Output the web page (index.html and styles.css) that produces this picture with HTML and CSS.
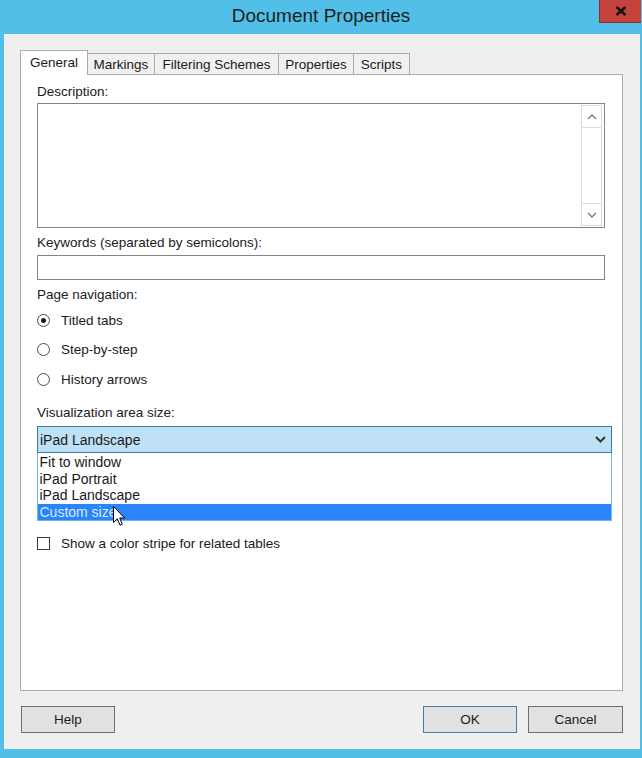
FILE: index.html
```html
<!DOCTYPE html>
<html>
<head>
<meta charset="utf-8">
<title>Document Properties</title>
<link rel="stylesheet" href="styles.css">
</head>
<body>
<div class="window">
  <div class="titlebar">
    <div class="tb-spacer"></div>
    <div class="title">Document Properties</div>
    <div class="close">
      <svg width="12" height="10" viewBox="0 0 12 10"><path d="M1.5 1 L10.5 9 M10.5 1 L1.5 9" stroke="#111" stroke-width="2.6" fill="none"/></svg>
    </div>
  </div>
  <div class="client">
    <div class="tabs">
      <div class="tab active t-general">General</div>
      <div class="tab t-markings">Markings</div>
      <div class="tab t-filter">Filtering Schemes</div>
      <div class="tab t-props">Properties</div>
      <div class="tab t-scripts">Scripts</div>
    </div>
    <div class="panel">
      <div class="label">Description:</div>
      <div class="textarea">
        <div class="vscroll">
          <div class="sbtn"><svg width="10" height="6" viewBox="0 0 10 6"><path d="M1 5 L5 1 L9 5" stroke="#7a7a7a" stroke-width="1.4" fill="none"/></svg></div>
          <div class="strack"></div>
          <div class="sbtn"><svg width="10" height="6" viewBox="0 0 10 6"><path d="M1 1 L5 5 L9 1" stroke="#7a7a7a" stroke-width="1.4" fill="none"/></svg></div>
        </div>
      </div>
      <div class="label l-keywords">Keywords (separated by semicolons):</div>
      <div class="input"></div>
      <div class="label l-nav">Page navigation:</div>
      <div class="radios">
        <div class="radio-row"><span class="radio checked"></span><span>Titled tabs</span></div>
        <div class="radio-row"><span class="radio"></span><span>Step-by-step</span></div>
        <div class="radio-row"><span class="radio"></span><span>History arrows</span></div>
      </div>
      <div class="label l-viz">Visualization area size:</div>
      <div class="combo">
        <span class="combo-text">iPad Landscape</span>
        <svg class="chev" width="11" height="7" viewBox="0 0 11 7"><path d="M1 1 L5.5 5.5 L10 1" stroke="#333" stroke-width="2" fill="none"/></svg>
      </div>
      <div class="list">
        <div class="item">Fit to window</div>
        <div class="item">iPad Portrait</div>
        <div class="item">iPad Landscape</div>
        <div class="item selected">Custom size</div>
        <svg class="cursor" width="13" height="21" viewBox="0 0 13 21"><path d="M0.5 0.5 L0.5 16.5 L4.3 12.8 L7 19.2 L9.3 18.2 L6.7 12 L11.7 12 Z" fill="#fff" stroke="#000" stroke-width="1" stroke-linejoin="round"/></svg>
      </div>
      <div class="check-row"><span class="checkbox"></span><span>Show a color stripe for related tables</span></div>
    </div>
    <div class="buttons">
      <div class="btn help">Help</div>
      <div class="btn-spacer"></div>
      <div class="btn ok">OK</div>
      <div class="btn cancel">Cancel</div>
    </div>
  </div>
</div>
</body>
</html>
```
FILE: styles.css
```css
html, body {
  margin: 0;
  padding: 0;
}
body {
  background: #51bfe7;
  font-family: "Liberation Sans", Arial, sans-serif;
  font-size: 13.5px;
  color: #1a1a1a;
  width: 642px;
  height: 758px;
  overflow: hidden;
}
.window {
  width: 642px;
  height: 758px;
  display: flex;
  flex-direction: column;
}
.titlebar {
  height: 34px;
  display: grid;
  grid-template-columns: 1fr auto 1fr;
  align-items: start;
}
.title {
  font-size: 19px;
  line-height: 32px;
  color: #1e1e1e;
  white-space: nowrap;
}
.close {
  justify-self: end;
  width: 42px;
  height: 23px;
  margin-right: 1px;
  box-sizing: border-box;
  background: #c5433d;
  border-left: 1px solid #8f2e29;
  border-bottom: 1px solid #8f2e29;
  display: flex;
  align-items: center;
  justify-content: center;
}
.client {
  margin: 0 2px 9px 4px;
  height: 715px;
  box-sizing: border-box;
  background: #efefef;
  padding: 16px 17px 0 16px;
  display: flex;
  flex-direction: column;
}
.tabs {
  display: flex;
  align-items: flex-end;
  height: 25px;
  margin-bottom: -1px;
  position: relative;
  z-index: 1;
}
.tab {
  box-sizing: border-box;
  height: 22px;
  border: 1px solid #acacac;
  background: #f0f0f0;
  margin-left: -1px;
  padding-top: 1px;
  display: flex;
  align-items: center;
  justify-content: center;
  white-space: nowrap;
  font-size: 13.5px;
}
.tab.active {
  height: 25px;
  background: #fff;
  border-bottom: none;
  margin-left: 0;
  padding-top: 0;
  padding-bottom: 1px;
  position: relative;
  z-index: 2;
}
.t-general { width: 68px; }
.t-markings { width: 68px; }
.t-filter { width: 125px; }
.t-props { width: 76px; }
.t-scripts { width: 57px; }
.panel {
  background: #fff;
  border: 1px solid #acacac;
  height: 617px;
  box-sizing: border-box;
  padding: 9px 0 0 16px;
  display: flex;
  flex-direction: column;
  align-items: flex-start;
}
.label {
  line-height: 16px;
  height: 16px;
  white-space: nowrap;
}
.textarea {
  margin-top: 3px;
  width: 568px;
  height: 125px;
  box-sizing: border-box;
  border: 1px solid #848484;
  padding: 1px 2px 0 0;
  display: flex;
  justify-content: flex-end;
}
.vscroll {
  width: 21px;
  height: 121px;
  display: flex;
  flex-direction: column;
}
.sbtn {
  height: 23px;
  box-sizing: border-box;
  border: 1px solid #dadada;
  background: #fff;
  display: flex;
  align-items: center;
  justify-content: center;
}
.strack {
  flex: 1;
  border-left: 1px solid #dadada;
  border-right: 1px solid #dadada;
}
.l-keywords { margin-top: 7px; }
.input {
  margin-top: 4px;
  width: 568px;
  height: 25px;
  box-sizing: border-box;
  border: 1px solid #848484;
  background: #fff;
}
.l-nav { margin-top: 7px; }
.radios {
  margin-top: 7px;
  display: flex;
  flex-direction: column;
  gap: 9.5px;
}
.radio-row, .check-row {
  height: 20px;
  display: flex;
  align-items: center;
  gap: 11px;
  white-space: nowrap;
}
.radio {
  width: 13px;
  height: 13px;
  box-sizing: border-box;
  border: 1px solid #4a4a4a;
  border-radius: 50%;
  background: #fff;
  display: flex;
  align-items: center;
  justify-content: center;
}
.radio.checked::after {
  content: "";
  width: 5px;
  height: 5px;
  border-radius: 50%;
  background: #1a1a1a;
}
.l-viz { margin-top: 16px; }
.combo {
  margin-top: 5px;
  width: 575px;
  height: 27px;
  box-sizing: border-box;
  border: 1px solid #3d7bab;
  background: #bfe1f5;
  padding: 0 5px 0 2px;
  display: flex;
  align-items: center;
  justify-content: space-between;
  font-size: 14px;
}
.list {
  position: relative;
  width: 575px;
  height: 68px;
  box-sizing: border-box;
  border: 1px solid #6ab8e8;
  border-top: none;
  background: #fff;
  padding-top: 1px;
  font-size: 14px;
}
.item {
  height: 16.5px;
  line-height: 16.5px;
  padding-left: 1.5px;
  white-space: nowrap;
}
.item.selected {
  background: #2a84fb;
  color: #d9eaff;
}
.cursor {
  position: absolute;
  left: 75px;
  top: 53px;
}
.check-row {
  margin-top: 12px;
}
.checkbox {
  width: 13px;
  height: 13px;
  box-sizing: border-box;
  border: 1px solid #3a3a3a;
  background: #fff;
}
.buttons {
  margin-top: 15px;
  display: flex;
  gap: 11px;
  padding-left: 1px;
}
.btn-spacer { flex: 1; }
.btn {
  height: 27px;
  width: 94px;
  box-sizing: border-box;
  border: 1px solid #6e6e6e;
  background: #e1e1e1;
  display: flex;
  align-items: center;
  justify-content: center;
}
.btn.ok { border-color: #3c7fb1; }
.btn.cancel { width: 95px; }
```
